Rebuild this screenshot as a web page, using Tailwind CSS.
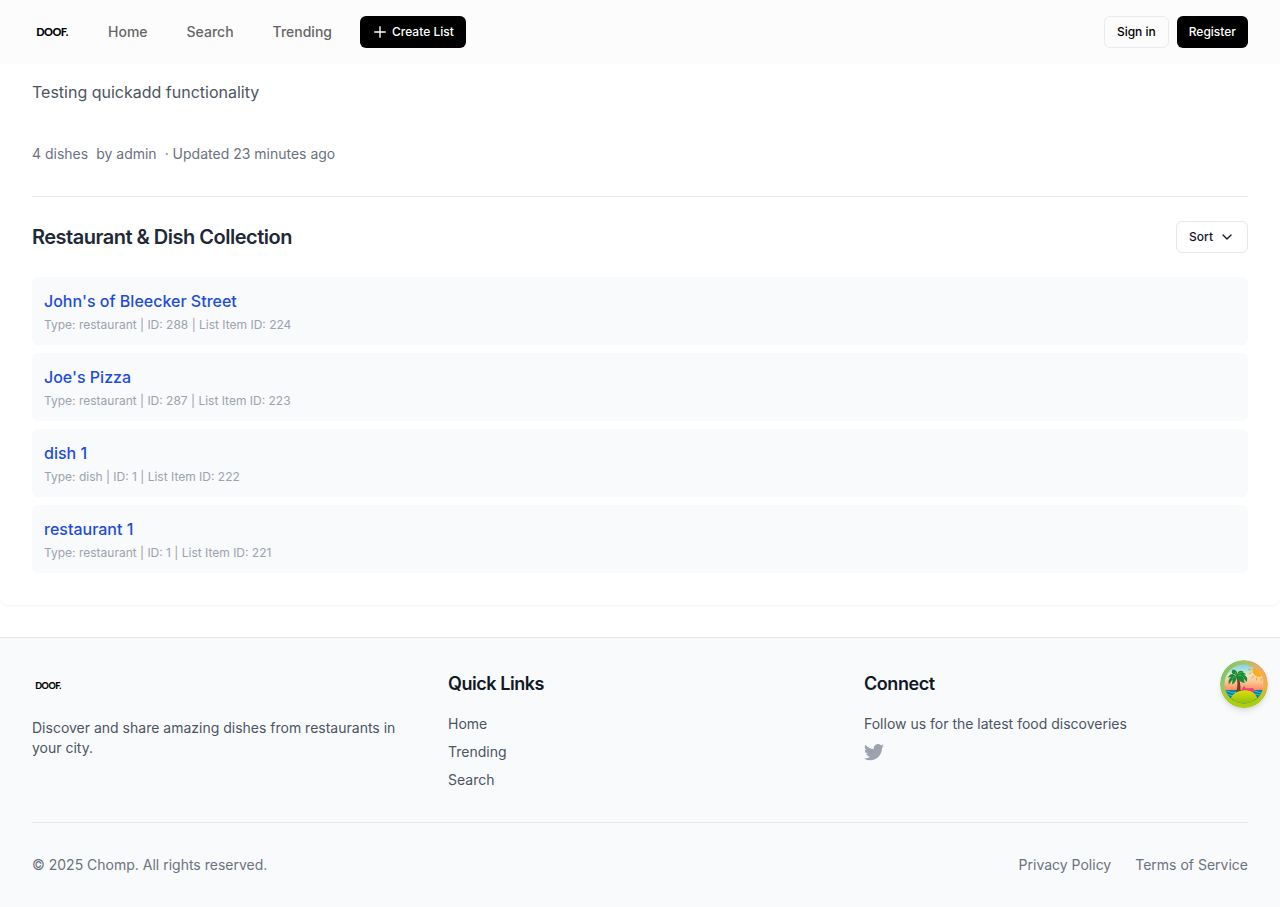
<!DOCTYPE html>
<html lang="en">
<head>
<meta charset="utf-8">
<meta name="viewport" content="width=device-width, initial-scale=1">
<title>Doof</title>
<script src="https://cdn.jsdelivr.net/npm/@tailwindcss/browser@4"></script>
</head>
<body class="flex min-h-screen flex-col bg-white font-['Inter',sans-serif] text-[#111827] antialiased">
<header class="flex h-16 items-center justify-between bg-[#fcfcfc] px-8">
  <div class="flex items-center">
    <a href="#" class="flex w-10 justify-center font-['Lato',sans-serif] text-[11px] font-black tracking-tighter text-black">DOOF.</a>
    <nav class="ml-9 flex items-center gap-[39px] text-sm font-medium text-[#666666]">
      <a href="#">Home</a>
      <a href="#">Search</a>
      <a href="#">Trending</a>
    </nav>
    <button type="button" class="ml-7 flex h-8 items-center gap-1 rounded-md bg-black px-3 text-xs font-medium text-white">
      <svg class="size-4" viewBox="0 0 24 24" fill="none" stroke="currentColor" stroke-width="2" stroke-linecap="round" aria-hidden="true"><path d="M4 12h16M12 4v16"/></svg>
      Create List
    </button>
  </div>
  <div class="flex items-center gap-2 text-xs font-medium">
    <button type="button" class="h-8 rounded-md border border-[#ebebeb] px-3 text-black">Sign in</button>
    <button type="button" class="h-8 rounded-md bg-black px-3 text-white">Register</button>
  </div>
</header>

<main class="mb-8 rounded-lg bg-white px-8 pt-4 pb-8 shadow-[0_1px_2px_0_rgba(0,0,0,0.05)]">
  <p class="mb-10 text-base text-[#4b5563]">Testing quickadd functionality</p>
  <div class="flex gap-2 border-b border-[#e5e7eb] pb-8 text-sm text-[#6b7280]">
    <span>4 dishes</span><span>by admin</span><span>· Updated 23 minutes ago</span>
  </div>
  <div class="my-6 flex items-center justify-between">
    <h2 class="text-xl font-semibold tracking-tight text-[#1f2937]">Restaurant &amp; Dish Collection</h2>
    <button type="button" class="flex h-8 items-center gap-1.5 rounded-md border border-[#e5e7eb] bg-white px-3 text-xs font-medium text-[#111827]">
      Sort
      <svg class="size-4" viewBox="0 0 24 24" fill="none" stroke="currentColor" stroke-width="2" stroke-linecap="round" stroke-linejoin="round" aria-hidden="true"><path d="m6 9 6 6 6-6"/></svg>
    </button>
  </div>
  <ul class="flex flex-col gap-2">
    <li class="rounded-md bg-[#f9fafb] p-3">
      <a href="#" class="block text-base font-medium text-[#1d4ed8]">John's of Bleecker Street</a>
      <p class="mt-1 text-xs text-[#9ca3af]">Type: restaurant | ID: 288 | List Item ID: 224</p>
    </li>
    <li class="rounded-md bg-[#f9fafb] p-3">
      <a href="#" class="block text-base font-medium text-[#1d4ed8]">Joe's Pizza</a>
      <p class="mt-1 text-xs text-[#9ca3af]">Type: restaurant | ID: 287 | List Item ID: 223</p>
    </li>
    <li class="rounded-md bg-[#f9fafb] p-3">
      <a href="#" class="block text-base font-medium text-[#1d4ed8]">dish 1</a>
      <p class="mt-1 text-xs text-[#9ca3af]">Type: dish | ID: 1 | List Item ID: 222</p>
    </li>
    <li class="rounded-md bg-[#f9fafb] p-3">
      <a href="#" class="block text-base font-medium text-[#1d4ed8]">restaurant 1</a>
      <p class="mt-1 text-xs text-[#9ca3af]">Type: restaurant | ID: 1 | List Item ID: 221</p>
    </li>
  </ul>
</main>

<footer class="relative border-t border-[#e5e7eb] bg-[#f9fafb] px-8 py-8 text-sm text-[#4b5563]">
  <div class="grid grid-cols-3 gap-8">
    <div>
      <a href="#" class="mb-4 flex h-8 w-8 items-center justify-center font-['Lato',sans-serif] text-[9px] font-black tracking-tighter text-black">DOOF.</a>
      <p>Discover and share amazing dishes from restaurants in your city.</p>
    </div>
    <div>
      <h3 class="mb-4 text-lg font-semibold tracking-tight text-[#111827]">Quick Links</h3>
      <ul class="flex flex-col gap-2">
        <li><a href="#">Home</a></li>
        <li><a href="#">Trending</a></li>
        <li><a href="#">Search</a></li>
      </ul>
    </div>
    <div>
      <h3 class="mb-4 text-lg font-semibold tracking-tight text-[#111827]">Connect</h3>
      <p class="mb-2">Follow us for the latest food discoveries</p>
      <a href="#" aria-label="Twitter" class="block w-5 text-[#9ca3af]">
        <svg class="size-5" viewBox="2 2 20 20" fill="currentColor" aria-hidden="true"><path d="M8.29 20.251c7.547 0 11.675-6.253 11.675-11.675 0-.178 0-.355-.012-.53A8.348 8.348 0 0022 5.92a8.19 8.19 0 01-2.357.646 4.118 4.118 0 001.804-2.27 8.224 8.224 0 01-2.605.996 4.107 4.107 0 00-6.993 3.743 11.65 11.65 0 01-8.457-4.287 4.106 4.106 0 001.27 5.477A4.072 4.072 0 012.8 9.713v.052a4.105 4.105 0 003.292 4.022 4.095 4.095 0 01-1.853.07 4.108 4.108 0 003.834 2.85A8.233 8.233 0 012 18.407a11.616 11.616 0 006.29 1.84"/></svg>
      </a>
    </div>
  </div>
  <div class="mt-8 flex items-center justify-between border-t border-[#e5e7eb] pt-8 text-[#6b7280]">
    <p>© 2025 Chomp. All rights reserved.</p>
    <div class="flex gap-6"><a href="#">Privacy Policy</a><a href="#">Terms of Service</a></div>
  </div>
  <button type="button" aria-label="Open query devtools" class="absolute top-[22px] right-3 size-12 overflow-hidden rounded-full shadow-md">
    <svg class="size-12" viewBox="0 0 48 48" aria-hidden="true">
      <defs>
        <linearGradient id="ring" x1="0" y1="0.1" x2="1" y2="0.7"><stop offset="0" stop-color="#62c96b"/><stop offset=".3" stop-color="#a2c46a"/><stop offset=".65" stop-color="#f4a768"/><stop offset="1" stop-color="#e9b53c"/></linearGradient>
        <linearGradient id="rim" x1="0" y1="0" x2="0" y2="1"><stop offset=".55" stop-color="#9fce1c" stop-opacity="0"/><stop offset=".85" stop-color="#a8cf12"/></linearGradient>
        <linearGradient id="sky" x1="0" y1="0" x2="0" y2="1"><stop offset=".08" stop-color="#70d3ee"/><stop offset=".3" stop-color="#e3e7c8"/><stop offset=".45" stop-color="#fdc793"/><stop offset=".65" stop-color="#ff8260"/></linearGradient>
        <linearGradient id="island" x1="0" y1="0" x2="0" y2="1"><stop offset="0" stop-color="#e0dc10"/><stop offset="1" stop-color="#8cc00c"/></linearGradient>
        <clipPath id="disc"><circle cx="24" cy="24" r="19.500"/></clipPath>
      </defs>
      <circle cx="24" cy="24" r="24" fill="url(#ring)"/>
      <circle cx="24" cy="24" r="24" fill="url(#rim)"/>
      <g clip-path="url(#disc)">
        <path fill="url(#sky)" d="M0 0h48v48H0z"/>
        <path fill="#087f9b" d="M0 30h48v18H0z"/>
        <path d="M4 32q3-2 6 0t6 0M32 32q3-2 6 0t6 0M4 35q3-2 6 0t6 0M33 35q3-2 6 0t6 0" fill="none" stroke="#35c3ce" stroke-width="1"/>
        <circle cx="39" cy="10.500" r="6.500" fill="#ffad17"/>
        <g stroke="#ff9b13" stroke-width="1" stroke-linecap="round"><path d="m31 6-2-.5M30.500 9.500l-2 .2M31 13l-2 1M33.500 16l-1.500 2M37 18l-.5 2M41 18.500l.3 2"/></g>
        <path d="M21.500 29.500 24 26l2 2.500 7-.5 1 2v2H23z" fill="#ed3f75"/>
        <path d="M17.800 15c2.200 5 2.900 10 2.600 17h-4.200c1.800-6 1.600-12-.2-17z" fill="#7c3b1c"/>
        <path d="M17 16c-4-3.500-7.500-2-9 1.500l3-.5c-2.500 2-3 4.800-2 7.500l3.500-5-.5 5c3-1.500 4.500-4 5-8.500zm0 0c1.500-4 6-5 9-1.500l-2.500.3c3.500 1.200 4.500 4 3.200 7.200l-3-3.500 1 4.500c-4-.5-6.500-2.500-7.700-7zm0 0c-4-1-7-4-4-6.500 3 .2 4.500 2 4.300 4.500 1-3 3-4 6-2.500-1.300 3-3.300 4.500-6.300 4.500z" fill="#178a3b"/>
        <path d="M12 19c1-2 2-3 4-2M18 16c2-1 4-1 6 2M18 14l4-2M15 12l2 3" fill="none" stroke="#45b63b" stroke-width="1"/>
        <path d="M10 44C9 35 17 30.300 25 30.300S38.500 35 38 44z" fill="url(#island)"/>
        <path d="m10 38 3 3M38 38l-3 3" stroke="#064d3c" stroke-width="1.500" stroke-dasharray="1 1"/>
      </g>
    </svg>
  </button>
</footer>
</body>
</html>
